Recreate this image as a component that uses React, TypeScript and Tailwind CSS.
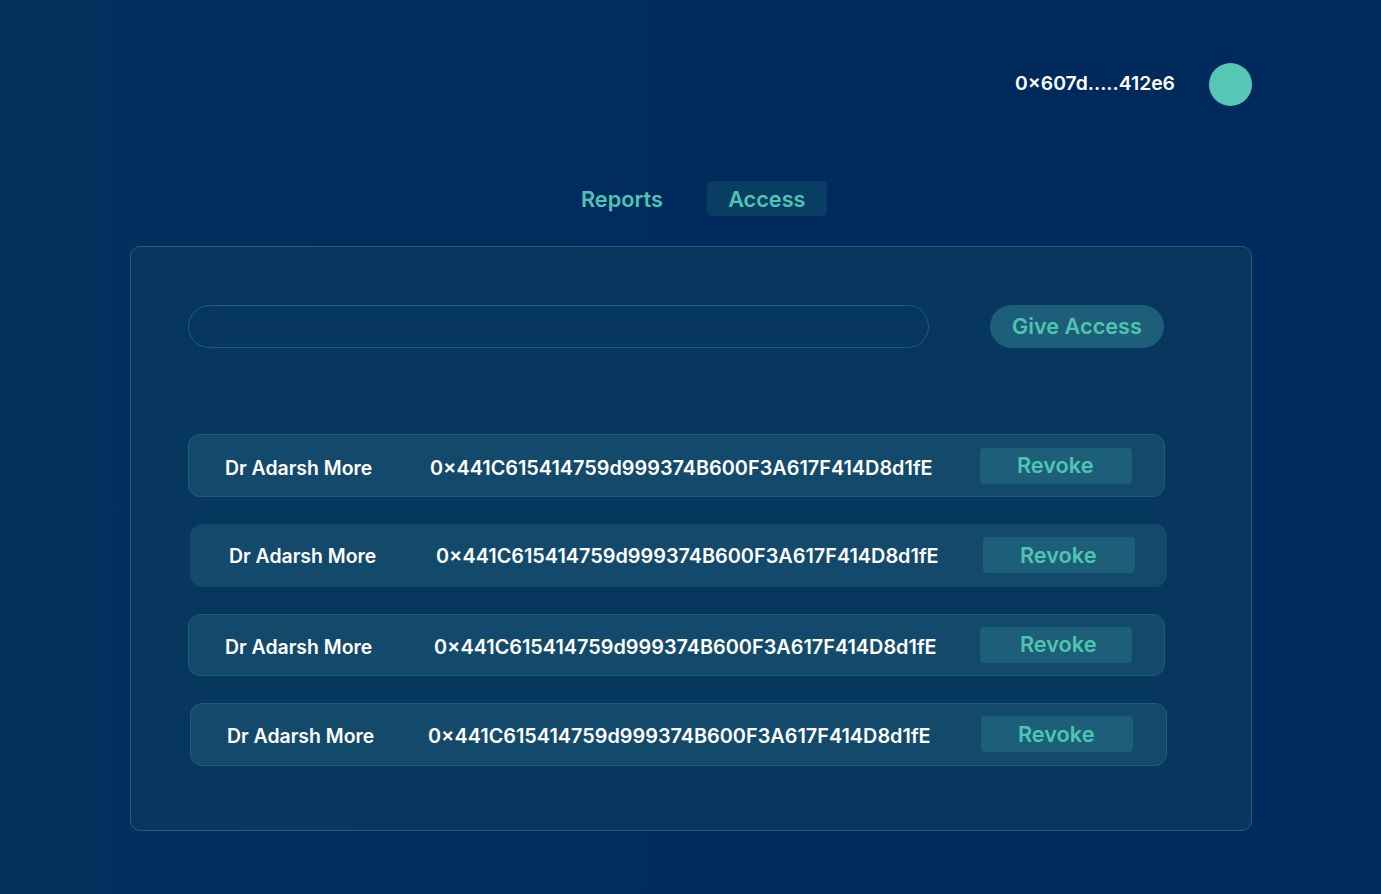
const rows = [
  { row: "ml-[58px] h-[63px] border-[#1c5f7c] mt-[86px]", name: "ml-[36px] mt-[4px]", addr: "ml-[58px] mt-[4px]", btn: "ml-[47px] pl-[37px]" },
  { row: "ml-[60px] h-[63px] border-[#134a6c] mt-[27px]", name: "ml-[38px] mt-[1px]", addr: "ml-[60px] mt-[1px]", btn: "ml-[44px] pl-[37px] mb-[1px]" },
  { row: "ml-[58px] h-[62px] border-[#1c5f7c] mt-[27px]", name: "ml-[36px] mt-[3px]", addr: "ml-[62px] mt-[3px]", btn: "ml-[43px] pl-[40px] pb-[2px]" },
  { row: "ml-[60px] h-[63px] border-[#1c5f7c] mt-[27px]", name: "ml-[36px] mt-[2px]", addr: "ml-[54px] mt-[2px]", btn: "ml-[50px] pl-[37px] mb-[1px]" },
];

export default function App() {
  return (
    <div className="h-[894px] w-[1381px] overflow-hidden bg-gradient-to-r from-[#03305d] via-[#002b5c] to-[#00295c] font-['Inter',sans-serif]">
      <header className="flex h-[181px] items-start justify-end pr-[129px] pt-[63px]">
        <span className="mr-[34px] mt-[8px] text-[19.35px] leading-[24px] font-[560] text-white">0×607d.....412e6</span>
        <div className="h-[43px] w-[43px] rounded-full bg-[#57c6b5]" />
      </header>
      <nav className="ml-[581px] flex h-[35px] items-center">
        <span className="pt-[1px] text-[21.7px] leading-[35px] font-[560] text-[#50c4b2]">Reports</span>
        <span className="ml-[44px] flex h-[35px] w-[120px] items-center justify-center rounded-[5px] bg-[#0a3d63] pt-[1px] text-[21.7px] font-[560] text-[#50c4b2]">Access</span>
      </nav>
      <main className="ml-[130px] mt-[30px] h-[585px] w-[1122px] rounded-[10px] border border-[#1c5f7c] bg-[#07375f] pt-[58px]">
        <div className="flex items-center">
          <div className="ml-[57px] h-[43px] w-[741px] rounded-full border border-[#1c5f7c] bg-[#07375f]" />
          <button className="ml-[61px] flex h-[43px] w-[174px] items-center justify-center rounded-full bg-[#1d5e78] text-[21.7px] font-[560] text-[#50c4b2]">Give Access</button>
        </div>
        {rows.map((r, i) => (
          <div key={i} className={`flex w-[977px] items-center rounded-[12px] border bg-[#134a6c] -translate-x-px ${r.row}`}>
            <span className={`w-[147px] shrink-0 text-[19.4px] leading-[24px] font-[560] whitespace-nowrap text-white ${r.name}`}>Dr Adarsh More</span>
            <span className={`w-[503px] shrink-0 text-[19.85px] leading-[24px] font-[560] whitespace-nowrap text-white ${r.addr}`}>0×441C615414759d999374B600F3A617F414D8d1fE</span>
            <button className={`flex h-[36px] w-[152px] shrink-0 items-center rounded-[4px] bg-[#1d5e78] text-[21.7px] font-[560] text-[#50c4b2] ${r.btn}`}>Revoke</button>
          </div>
        ))}
      </main>
    </div>
  );
}
